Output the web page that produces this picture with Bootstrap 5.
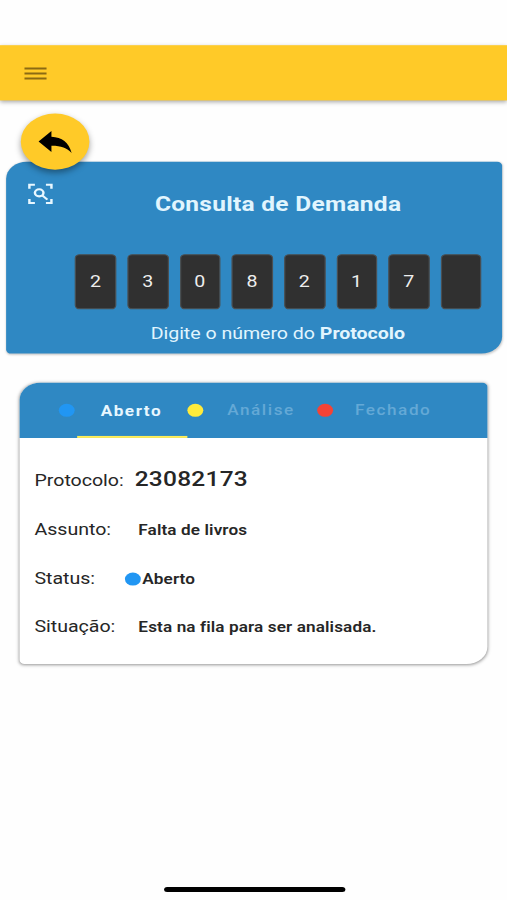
<!DOCTYPE html>
<html lang="pt-BR">
<head>
<meta charset="utf-8">
<meta name="viewport" content="width=device-width, initial-scale=1">
<title>Consulta de Demanda</title>
<link href="https://cdn.jsdelivr.net/npm/bootstrap@5.3.0/dist/css/bootstrap.min.css" rel="stylesheet">
<style>
  html, body { width: 100%; height: 100%; overflow: hidden; background: #fefefe; }
  body { font-family: Roboto, "Liberation Sans", sans-serif; color: #262626; }
  /* 414x896 phone canvas stretched over the window */
  .phone { width: 414px; height: 896px; transform: scale(1.22464, 1.00446); transform-origin: 0 0; }
  .status-space { height: 44.6px; }
  .app-bar { height: 55.8px; background: #ffca28; padding: 1px 16.7px 0; box-shadow: 0 2px 4px rgba(0,0,0,.35); }
  .back-fab { width: 56px; height: 56px; margin: 12.6px 0 -8px 16.8px; background: #ffca28; box-shadow: 0 3px 6px rgba(0,0,0,.38); z-index: 2; }
  .panel { background: #2f88c3; border-radius: 17px 4px 17px 4px; }
  .query { margin: 0 4px 0 5px; height: 191.4px; box-shadow: 0 1px 2px rgba(0,0,0,.2); color: #e1f5fe; }
  .scan { margin: 20px 0 0 15.6px; }
  .query-title { font-size: 20px; font-weight: 700; line-height: 24px; letter-spacing: .23px; margin: 30px 0 0 81.9px; }
  .digits { gap: 9.05px; margin: 38px 0 0 56.4px; }
  .digit { width: 33.6px; height: 55.2px; border-radius: 4px; background: #303030; border: 1px solid #4a4f52; color: #eee; font-size: 16px; letter-spacing: .5px; }
  .hint { font-size: 16px; line-height: 20px; letter-spacing: -.03px; margin: 13.8px 0 0 118px; }
  .result { margin: 28.2px 15.7px 0 16.4px; height: 280px; background: #fff; border-radius: 17px 4px 17px 4px; box-shadow: 0 1px 3px rgba(0,0,0,.42); }
  .tabs { height: 55.6px; background: #2f88c3; border-radius: 17px 4px 0 0; font-size: 14px; font-weight: 500; letter-spacing: 1.25px; color: #64a9d6; }
  .dot { width: 13.4px; height: 13.4px; }
  .dot-blue { background: #2196f3; } .dot-yellow { background: #ffeb3b; } .dot-red { background: #f44336; }
  .tabs .dot-blue { margin-left: 31.3px; }
  .tab-on { width: 90px; height: 55.6px; margin-left: 1.8px; color: #e8f7ff; font-weight: 700; border-bottom: 2px solid #ffee58; padding: 3.6px 0 0 19.3px; }
  .tab-name { width: 92.7px; padding: 1px 0 0 19.3px; }
  .tab-name.last-tab { padding-left: 17.6px; }
  .fact { padding-left: 11.8px; height: 48px; }
  .fact-label { font-size: 16px; letter-spacing: -.03px; width: 84.8px; }
  .fact-value { font-size: 14px; font-weight: 600; letter-spacing: .09px; padding-top: 1px; }
  .number { font-size: 20px; font-weight: 500; letter-spacing: .2px; margin-left: -3px; }
  .fact-first { padding-top: 9.6px; }
  .status-dot { margin: 1px 1.2px 0 -11.4px; }
  .home-bar { width: 148px; height: 5px; background: #000; margin: 222.6px auto 0 133.5px; }
</style>
</head>
<body>
<div class="phone d-flex flex-column">
  <div class="status-space flex-shrink-0"></div>
  <header class="app-bar d-flex align-items-center flex-shrink-0">
    <svg width="24" height="24" viewBox="0 0 24 24" stroke="#8b6a13" stroke-width="1.9"><path d="M3 7.2h18M3 12.2h18M3 17.2h18"/></svg>
  </header>
  <div class="back-fab rounded-circle position-relative d-flex flex-shrink-0">
    <svg width="56" height="56" viewBox="0 0 56 56"><path d="M14.500 27.800 25 17.500v5.700c8.600.500 14.200 5.700 16.500 16.100-3.800-5.400-9-7.400-16.500-7.300v6.300z" fill="#000"/></svg>
  </div>
  <section class="panel query flex-shrink-0">
    <div class="d-flex align-items-start">
      <svg class="scan" width="24" height="24" viewBox="0 0 24 24" fill="none" stroke="#e8f7ff" stroke-width="2"><path d="M7.500 3H3v4M16.500 3H21v4M3 17v4h4.500M21 17v4h-4.500"/><circle cx="11" cy="11" r="3.500"/><path d="m13.500 13.500 4.200 4.200"/></svg>
      <div class="query-title text-nowrap">Consulta de Demanda</div>
    </div>
    <div class="digits d-flex">
      <div class="digit d-flex align-items-center justify-content-center">2</div>
      <div class="digit d-flex align-items-center justify-content-center">3</div>
      <div class="digit d-flex align-items-center justify-content-center">0</div>
      <div class="digit d-flex align-items-center justify-content-center">8</div>
      <div class="digit d-flex align-items-center justify-content-center">2</div>
      <div class="digit d-flex align-items-center justify-content-center">1</div>
      <div class="digit d-flex align-items-center justify-content-center">7</div>
      <div class="digit"></div>
    </div>
    <div class="hint text-nowrap">Digite o número do <b>Protocolo</b></div>
  </section>
  <section class="result flex-shrink-0">
    <div class="tabs d-flex align-items-center">
      <span class="dot dot-blue rounded-circle"></span>
      <div class="tab-on d-flex align-items-center">Aberto</div>
      <span class="dot dot-yellow rounded-circle"></span>
      <div class="tab-name">Análise</div>
      <span class="dot dot-red rounded-circle"></span>
      <div class="tab-name last-tab">Fechado</div>
    </div>
    <div class="pt-3 text-nowrap">
      <div class="fact fact-first d-flex align-items-baseline"><span class="fact-label">Protocolo:</span><span class="number">23082173</span></div>
      <div class="fact d-flex align-items-center mt-1"><span class="fact-label">Assunto:</span><span class="fact-value">Falta de livros</span></div>
      <div class="fact d-flex align-items-center"><span class="fact-label">Status:</span><span class="dot dot-blue status-dot rounded-circle"></span><span class="fact-value">Aberto</span></div>
      <div class="fact d-flex align-items-center"><span class="fact-label">Situação:</span><span class="fact-value">Esta na fila para ser analisada.</span></div>
    </div>
  </section>
  <div class="home-bar rounded-pill flex-shrink-0"></div>
</div>
<script src="https://cdn.jsdelivr.net/npm/bootstrap@5.3.0/dist/js/bootstrap.bundle.min.js"></script>
</body>
</html>
